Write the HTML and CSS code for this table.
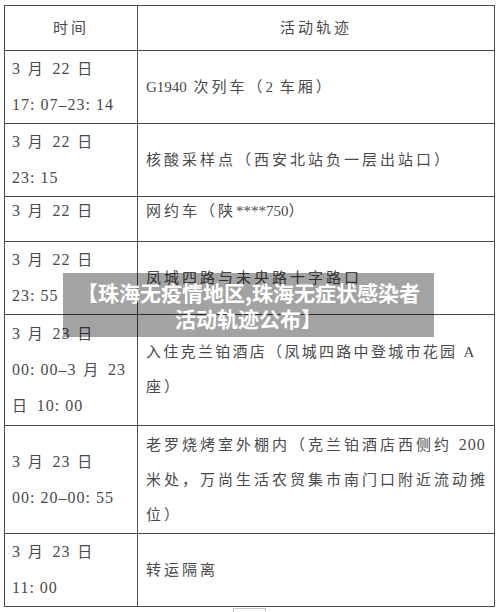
FILE: index.html
```html
<!DOCTYPE html>
<html lang="zh-CN">
<head>
<meta charset="utf-8">
<title>活动轨迹</title>
<link rel="stylesheet" href="styles.css">
</head>
<body>
<div class="page">
  <table class="track">
    <colgroup><col class="c-time"><col class="c-act"></colgroup>
    <tr class="h45 head">
      <td class="center">时间</td>
      <td class="center">活动轨迹</td>
    </tr>
    <tr class="h73">
      <td><span class="n">3</span> 月 <span class="n">22</span> 日<br><span class="n">17: 07–23: 14</span></td>
      <td><span class="m">G1940</span> 次列车（<span class="m">2</span> 车厢）</td>
    </tr>
    <tr class="h73">
      <td><span class="n">3</span> 月 <span class="n">22</span> 日<br><span class="n">23: 15</span></td>
      <td>核酸采样点（西安北站负一层出站口）</td>
    </tr>
    <tr class="h45 top">
      <td><span class="n">3</span> 月 <span class="n">22</span> 日</td>
      <td>网约车（陕<span class="m">****750</span>）</td>
    </tr>
    <tr class="h73">
      <td><span class="n">3</span> 月 <span class="n">22</span> 日<br><span class="n">23: 55</span></td>
      <td>凤城四路与未央路十字路口</td>
    </tr>
    <tr class="h111">
      <td><span class="n">3</span> 月 <span class="n">23</span> 日<br><span class="n">00: 00–3</span> 月 <span class="n">23</span><br>日 <span class="n">10: 00</span></td>
      <td><span class="tight">入住克兰铂酒店（凤城四路中登城市花园 <span class="m">A</span></span><br>座）</td>
    </tr>
    <tr class="h108">
      <td><span class="n">3</span> 月 <span class="n">23</span> 日<br><span class="n">00: 20–00: 55</span></td>
      <td>老罗烧烤室外棚内（克兰铂酒店西侧约 <span class="n">200</span><br>米处，万尚生活农贸集市南门口附近流动摊<br>位）</td>
    </tr>
    <tr class="h73">
      <td><span class="n">3</span> 月 <span class="n">23</span> 日<br><span class="n">11: 00</span></td>
      <td>转运隔离</td>
    </tr>
  </table>
  <div class="edge"></div>
  <div class="caption">【珠海无疫情地区,珠海无症状感染者<br>活动轨迹公布】</div>
</div>
</body>
</html>
```

FILE: styles.css
```css
html, body {
  margin: 0;
  padding: 0;
  background: #ffffff;
}

.page {
  position: relative;
  width: 500px;
  height: 612px;
  overflow: hidden;
  padding-top: 5px;
  box-sizing: border-box;
}

.track {
  margin-left: 4px;
  width: 490px;
  table-layout: fixed;
  border-collapse: collapse;
  border: 1.5px solid #4a4a4a;
  font-family: "Liberation Serif", "Noto Sans CJK SC", serif;
  font-size: 15px;
  letter-spacing: 3px;
  color: #4a4a4a;
}

.c-time { width: 133px; }
.c-act { width: 357px; }

.track td {
  border: 1.5px solid #4a4a4a;
  padding: 0 0 0 7px;
  line-height: 35px;
  vertical-align: middle;
  white-space: nowrap;
  overflow: hidden;
}

.track td + td {
  padding-left: 8px;
}

.track td.center {
  text-align: center;
  padding-left: 0;
}

.track td + td.center {
  padding-left: 0;
}

.h45 { height: 45px; }
.h73 { height: 73px; }
.h108 { height: 108px; }
.h111 { height: 111px; }

.top td {
  vertical-align: top;
  line-height: 28px;
}

.head td {
  line-height: 44px;
}

.n {
  font-size: 16px;
  letter-spacing: 1px;
}

.m {
  font-size: 15px;
  letter-spacing: 0;
}

.tight {
  letter-spacing: 2.3px;
}

.edge {
  margin-left: 233px;
  margin-top: 1px;
  width: 31px;
  height: 6px;
  border: 1px solid #c8c8c8;
  border-bottom: none;
}

.caption {
  position: absolute;
  left: 63px;
  top: 273px;
  width: 371px;
  height: 64px;
  box-sizing: border-box;
  padding-top: 6px;
  background: rgba(0, 0, 0, 0.36);
  color: #ffffff;
  font-family: "Noto Sans CJK SC", "Noto Sans", sans-serif;
  font-weight: 700;
  font-size: 21px;
  line-height: 26px;
  text-align: center;
  letter-spacing: 0;
}
```
